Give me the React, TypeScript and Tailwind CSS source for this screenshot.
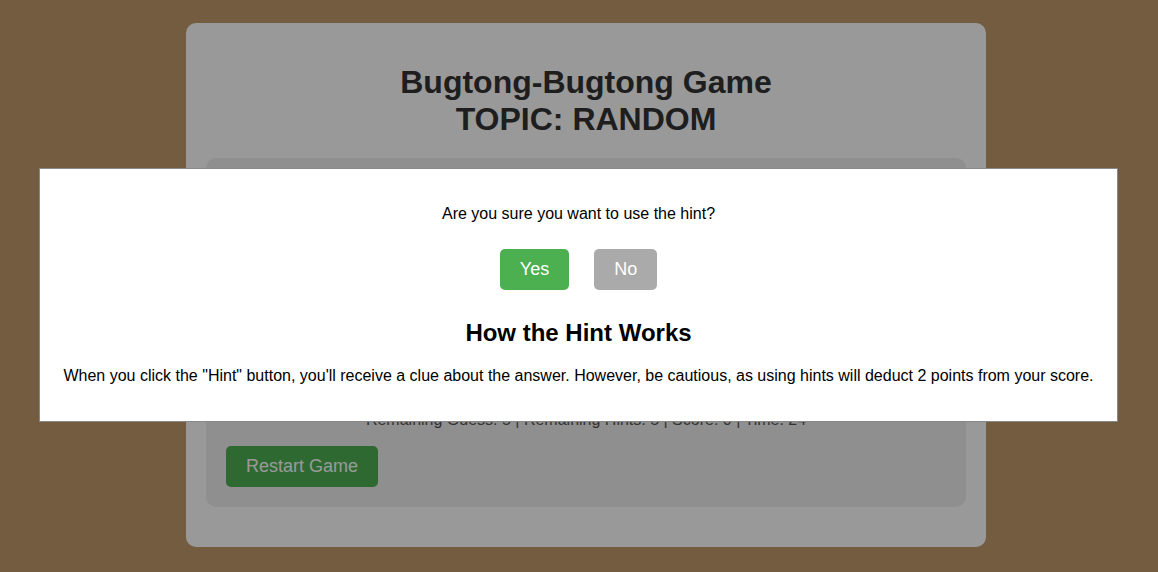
export default function App() {
  return (
    <div
      className="relative min-h-[572px] bg-[#c19a6b] pt-[23px] pb-[25px] pl-[14px]"
      style={{ fontFamily: '"Liberation Sans", Arial, sans-serif' }}
    >
      {/* Game card */}
      <div className="mx-auto w-[800px] rounded-[10px] bg-white p-5 text-center">
        <h1 className="mt-[21px] mb-[20px] text-[32px] font-bold leading-[37px] text-[#333]">
          Bugtong-Bugtong Game
          <br />
          TOPIC: RANDOM
        </h1>

        <div className="mb-5 rounded-[10px] bg-[#eee] p-5 text-left">
          <div className="flex h-[233px] flex-col items-center gap-4 overflow-hidden pt-4">
            <p className="text-lg text-[#333]">May puno walang bunga, may dahon walang sanga.</p>
            <input
              className="w-[300px] rounded border border-[#ccc] bg-white px-3 py-2 text-base"
              placeholder="Enter your guess"
              readOnly
            />
            <div className="flex gap-3">
              <button className="rounded-[5px] bg-[#4CAF50] px-5 py-2.5 text-lg text-white">Guess</button>
              <button className="rounded-[5px] bg-[#2196F3] px-5 py-2.5 text-lg text-white">Hint</button>
            </div>
          </div>
          <p className="text-center text-base leading-[18px] text-[#555]">
            Remaining Guess: 5 | Remaining Hints: 5 | Score: 0 | Time: 24
          </p>
          <button className="mt-[17px] rounded-[5px] bg-[#4CAF50] px-5 py-2.5 text-lg leading-[21px] text-white">
            Restart Game
          </button>
        </div>
      </div>

      {/* Dim overlay */}
      <div className="absolute inset-0 bg-black/40" />

      {/* Hint modal */}
      <div className="absolute left-[39px] top-[168px] w-[1079px] border border-[#888] bg-white px-5 pt-5 pb-5 text-center text-black">
        <p className="mt-4 text-base leading-[18px]">Are you sure you want to use the hint?</p>
        <div className="mt-[26px] flex justify-center gap-[25px]">
          <button className="rounded-[5px] bg-[#4CAF50] px-5 py-2.5 text-lg leading-[21px] text-white">Yes</button>
          <button className="rounded-[5px] bg-[#aaa] px-5 py-2.5 text-lg leading-[21px] text-white">No</button>
        </div>
        <h2 className="mt-[29px] mb-[20px] text-2xl font-bold leading-[28px]">How the Hint Works</h2>
        <p className="mb-4 text-base leading-[18px]">
          When you click the "Hint" button, you'll receive a clue about the answer. However, be cautious, as using hints
          will deduct 2 points from your score.
        </p>
      </div>
    </div>
  );
}
